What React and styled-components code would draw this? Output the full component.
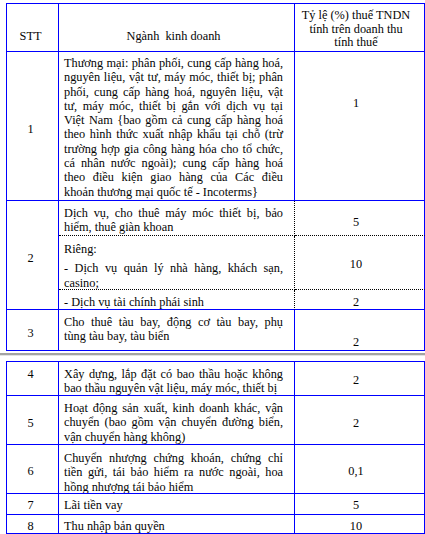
import styled, { createGlobalStyle } from "styled-components";

const GlobalStyle = createGlobalStyle`
  html, body {
    margin: 0;
    padding: 0;
    background: #ffffff;
  }
  body {
    font-family: "Liberation Serif", "Times New Roman", serif;
    color: #000000;
  }
`;

const BLUE = "#0000ff";

const Page = styled.div`
  width: 425px;
  height: 534px;
  padding-top: 3px;
  box-sizing: border-box;
  overflow: hidden;
`;

const Sheet = styled.div`
  margin-left: 6px;
  width: 419px;
  display: grid;
  grid-template-columns: 53px 236px 130px;
  grid-template-rows: ${(p) => p.$rows};
  font-family: "Liberation Serif", "Times New Roman", serif;
  font-size: 12.3px;
  line-height: 14.3px;
  color: #050505;
`;

const PageBreak = styled.div`
  margin: 2px 0 5px;
  height: 2px;
  background: #a3a3a3;
  border-bottom: 1px solid #e2e2e2;
  box-sizing: content-box;
`;

const Cell = styled.div`
  box-sizing: border-box;
  min-width: 0;
  overflow: hidden;
  border-right: 1px ${(p) => (p.$dotRight ? "dotted #000" : `solid ${BLUE}`)};
  border-bottom: 1px ${(p) => (p.$dotBottom ? "dotted #000" : `solid ${BLUE}`)};
  border-left: ${(p) => (p.$first ? `1px solid ${BLUE}` : "none")};
  border-top: ${(p) => (p.$top ? `1px solid ${BLUE}` : "none")};
  grid-row: ${(p) => (p.$span ? `span ${p.$span}` : "auto")};
  padding-top: ${(p) => p.$pt || 0}px;
  white-space: nowrap;
`;

const NumCell = styled(Cell)`
  text-align: center;
  padding-right: 4px;
`;

const TextCell = styled(Cell)`
  padding-left: 5px;
  padding-right: 11px;
  text-align: ${(p) => (p.$center ? "center" : "left")};
`;

const RateCell = styled(Cell)`
  text-align: center;
  padding-right: 7px;
`;

const HeadLines = styled.div`
  line-height: 13.5px;
`;

const Line = styled.span`
  display: block;
  text-align: ${(p) => (p.$end ? "left" : "justify")};
  text-align-last: ${(p) => (p.$end ? "left" : "justify")};
  margin-top: ${(p) => p.$gap || 0}px;
`;

const Para = ({ lines }) =>
  lines.map((l, i) => (
    <Line key={i} $end={i === lines.length - 1}>
      {l}
    </Line>
  ));

const tableTwo = [
  {
    stt: "4",
    sttPt: 5,
    ratePt: 11,
    textPt: 5,
    rate: "2",
    lines: [
      "Xây dựng, lắp đặt có bao thầu hoặc không",
      "bao thầu nguyên vật liệu, máy móc, thiết bị",
    ],
  },
  {
    stt: "5",
    sttPt: 20,
    ratePt: 20,
    textPt: 5,
    rate: "2",
    lines: [
      "Hoạt động sản xuất, kinh doanh khác, vận",
      "chuyển (bao gồm vận chuyển đường biển,",
      "vận chuyển hàng không)",
    ],
  },
  {
    stt: "6",
    sttPt: 19,
    ratePt: 19,
    textPt: 6,
    rate: "0,1",
    lines: [
      "Chuyển nhượng chứng khoán, chứng chỉ",
      "tiền gửi, tái bảo hiểm ra nước ngoài, hoa",
      "hồng nhượng tái bảo hiểm",
    ],
  },
  { stt: "7", sttPt: 4, ratePt: 4, textPt: 4, rate: "5", lines: ["Lãi tiền vay"] },
  { stt: "8", sttPt: 4, ratePt: 4, textPt: 4, rate: "10", lines: ["Thu nhập bản quyền"] },
];

const App = () => {
  return (
    <Page>
      <GlobalStyle />
      <Sheet $rows="49px 149px 35px 54px 20px 41px">
        {/* header */}
        <NumCell $first $top $pt={25}>STT</NumCell>
        <TextCell $top $center $pt={25}>
          Ngành&nbsp; kinh doanh
        </TextCell>
        <RateCell $top $pt={5}>
          <HeadLines>
            <div>Tỷ lệ (%) thuế TNDN</div>
            <div>tính trên doanh thu</div>
            <div>tính thuế</div>
          </HeadLines>
        </RateCell>

        {/* 1 */}
        <NumCell $first $pt={70}>1</NumCell>
        <TextCell $pt={4}>
          <Para
            lines={[
              "Thương mại: phân phối, cung cấp hàng hoá,",
              "nguyên liệu, vật tư, máy móc, thiết bị; phân",
              "phối, cung cấp hàng hoá, nguyên liệu, vật",
              "tư, máy móc, thiết bị gắn với dịch vụ tại",
              "Việt Nam {bao gồm cả cung cấp hàng hoá",
              "theo hình thức xuất nhập khẩu tại chỗ (trừ",
              "trường hợp gia công hàng hóa cho tổ chức,",
              "cá nhân nước ngoài); cung cấp hàng hoá",
              "theo điều kiện giao hàng của Các điều",
              "khoản thương mại quốc tế - Incoterms}",
            ]}
          />
        </TextCell>
        <RateCell $pt={44}>1</RateCell>

        {/* 2 */}
        <NumCell $first $span={3} $pt={50}>2</NumCell>
        <TextCell $dotRight $dotBottom $pt={5}>
          <Para lines={["Dịch vụ, cho thuê máy móc thiết bị, bảo", "hiểm, thuê giàn khoan"]} />
        </TextCell>
        <RateCell $dotBottom $pt={14}>5</RateCell>
        <TextCell $dotRight $dotBottom $pt={6}>
          <Line $end>Riêng:</Line>
          <Line $gap={5}>- Dịch vụ quản lý nhà hàng, khách sạn,</Line>
          <Line $end>casino;</Line>
        </TextCell>
        <RateCell $dotBottom $pt={21}>10</RateCell>
        <TextCell $dotRight $pt={5}>
          <Line $end>- Dịch vụ tài chính phái sinh</Line>
        </TextCell>
        <RateCell $pt={5}>2</RateCell>

        {/* 3 */}
        <NumCell $first $pt={16}>3</NumCell>
        <TextCell $pt={5}>
          <Para lines={["Cho thuê tàu bay, động cơ tàu bay, phụ", "tùng tàu bay, tàu biển"]} />
        </TextCell>
        <RateCell $pt={25}>2</RateCell>
      </Sheet>

      <PageBreak />

      <Sheet $rows="35px 49px 49px 21px 19px">
        {tableTwo.map((r, i) => [
          <NumCell key={`n${i}`} $first $top={i === 0} $pt={r.sttPt}>
            {r.stt}
          </NumCell>,
          <TextCell key={`t${i}`} $top={i === 0} $pt={r.textPt}>
            <Para lines={r.lines} />
          </TextCell>,
          <RateCell key={`r${i}`} $top={i === 0} $pt={r.ratePt}>
            {r.rate}
          </RateCell>,
        ])}
      </Sheet>
    </Page>
  );
};

export default App;
